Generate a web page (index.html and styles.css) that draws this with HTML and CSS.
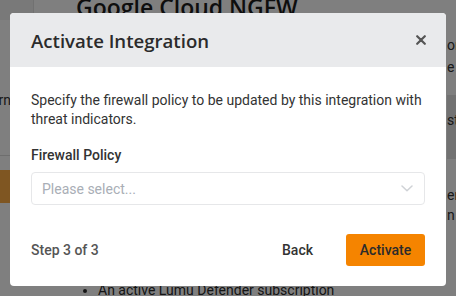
FILE: index.html
```html
<!DOCTYPE html>
<html lang="en">
<head>
<meta charset="utf-8">
<title>Activate Integration</title>
<link rel="stylesheet" href="styles.css">
</head>
<body>
<div class="page">
  <header class="page-head">
    <div class="brand-cell"></div>
    <h1 class="page-title">Google Cloud NGFW</h1>
  </header>
  <div class="page-body">
    <div class="col-left">
      <div class="clip-end"><span>Modern</span></div>
      <div class="rule"></div>
      <div class="orange-bar"></div>
    </div>
    <div class="col-main">
      <ul class="reqs">
        <li>An active Lumu Defender subscription</li>
      </ul>
    </div>
    <div class="col-right">
      <p class="frag frag-a">or</p>
      <p class="frag">e</p>
      <div class="band"><p class="frag">st</p></div>
      <p class="frag frag-b">er</p>
      <p class="frag">n</p>
    </div>
  </div>
</div>

<div class="backdrop"></div>

<div class="modal" role="dialog" aria-labelledby="modal-title">
  <div class="modal-head">
    <h2 class="modal-title" id="modal-title">Activate Integration</h2>
    <button class="close" aria-label="Close">
      <svg width="10" height="10" viewBox="0 0 10 10"><path d="M1.2 1.2 L8.8 8.8 M8.8 1.2 L1.2 8.8" stroke="#555" stroke-width="2.2" stroke-linecap="round" fill="none"/></svg>
    </button>
  </div>
  <div class="modal-body">
    <p class="desc">Specify the firewall policy to be updated by this integration with threat indicators.</p>
    <label class="field-label">Firewall Policy</label>
    <div class="select">
      <span class="placeholder">Please select...</span>
      <svg width="12" height="7" viewBox="0 0 12 7"><path d="M1 1 L6 5.8 L11 1" stroke="#cfd2d6" stroke-width="1.5" fill="none" stroke-linecap="round" stroke-linejoin="round"/></svg>
    </div>
  </div>
  <div class="modal-foot">
    <span class="step">Step 3 of 3</span>
    <div class="actions">
      <button class="btn-back">Back</button>
      <button class="btn-primary">Activate</button>
    </div>
  </div>
</div>
</body>
</html>
```

FILE: styles.css
```css
* { box-sizing: border-box; }
html, body { margin: 0; padding: 0; }
body {
  width: 456px;
  height: 296px;
  overflow: hidden;
  background: #ffffff;
  font-family: Roboto, "Liberation Sans", sans-serif;
  color: #222;
  position: relative;
}

/* ---------- background page ---------- */
.page { width: 456px; height: 296px; display: flex; flex-direction: column; }
.page-head { display: flex; height: 20px; flex: none; }
.brand-cell { width: 34px; background: #f2f2f2; border-right: 1px solid #e2e2e2; }
.page-title {
  margin: -9px 0 0 42px;
  font-family: "Open Sans", "Liberation Sans", sans-serif;
  font-weight: 600;
  font-size: 23px;
  line-height: 32px;
  color: #1c1c1c;
  white-space: nowrap;
}
.page-body { flex: 1; display: grid; grid-template-columns: 11px 1fr 10px; }
.col-left { overflow: hidden; }
.clip-end {
  display: flex; justify-content: flex-end; overflow: hidden;
  margin-top: 72px; font-size: 14px; line-height: 16px; color: #333; white-space: nowrap;
}
.rule { height: 1px; background: #dcdcdc; margin-top: 47px; }
.orange-bar { height: 33px; margin-top: 14px; background: #ffac44; }
.col-main { display: flex; flex-direction: column; justify-content: flex-end; }
.reqs {
  margin: 0 0 -4px 0; padding: 0 0 0 87px;
  font-size: 14px; line-height: 20px; color: #2a2a2a; white-space: nowrap;
}
.col-right { overflow: hidden; padding-left: 1px; font-size: 14px; color: #333; white-space: nowrap; }
.frag { margin: 0; line-height: 22px; }
.frag-a { margin-top: 14px; }
.band { margin-top: 17px; height: 64px; background: #e4e4e4; padding-top: 14px; }
.frag-b { margin-top: 27px; line-height: 18px; }

.backdrop { position: absolute; inset: 0; background: rgba(0, 0, 0, 0.5); }

/* ---------- modal ---------- */
.modal {
  position: absolute;
  left: 10px; top: 13px;
  width: 436px;
  background: #fff;
  border-radius: 4px;
  overflow: hidden;
  display: flex; flex-direction: column;
}
.modal-head {
  height: 54px;
  background: #e9eaec;
  display: flex; align-items: center; justify-content: space-between;
  padding: 0 20px 0 21px;
}
.modal-title {
  margin: 0;
  font-family: "Open Sans", "Liberation Sans", sans-serif;
  font-weight: 600;
  font-size: 18.6px;
  color: #2b2b2b;
}
.close {
  border: 0; background: none; padding: 0; width: 10px; height: 10px;
  display: flex; align-items: center; justify-content: center; cursor: pointer;
}
.modal-body { padding: 24px 21px 0 21px; display: flex; flex-direction: column; }
.desc { margin: 0; font-size: 14px; line-height: 19px; color: #333; }
.field-label { margin-top: 17px; font-size: 14px; line-height: 18px; font-weight: 500; color: #333; }
.select {
  margin-top: 8px; height: 33px;
  border: 1px solid #e6e7e9; border-radius: 4px;
  display: flex; align-items: center; justify-content: space-between;
  padding: 0 11px 0 10px;
}
.placeholder { font-size: 14px; color: #a9aeb6; }
.modal-foot {
  display: flex; align-items: center; justify-content: space-between;
  padding: 29px 21px 20px 21px;
}
.step { font-size: 14px; font-weight: 500; color: #555; }
.actions { display: flex; align-items: center; gap: 17px; }
.btn-back {
  border: 0; background: none; padding: 0 16px; height: 32px;
  font-family: Roboto, sans-serif; font-size: 14px; font-weight: 500; color: #333;
}
.btn-primary {
  border: 0; background: #f58400; border-radius: 3px;
  width: 79px; height: 32px; padding: 0;
  font-family: Roboto, sans-serif; font-size: 14px; font-weight: 500; color: #2b2b2b;
}
```
